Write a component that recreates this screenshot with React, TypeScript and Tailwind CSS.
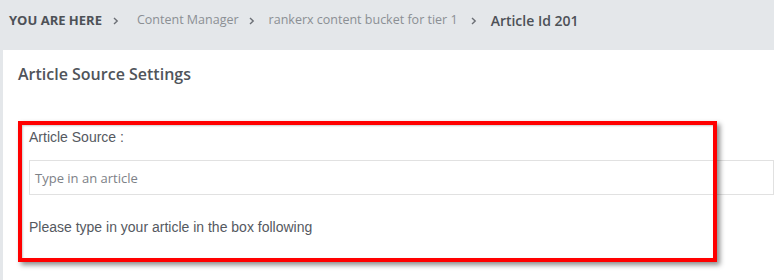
import React from 'react';

const Chevron = ({ className = '' }: { className?: string }) => (
  <svg width="6" height="8" viewBox="0 0 6 8" className={`shrink-0 ${className}`}>
    <path d="M1 1l3.2 3L1 7" fill="none" stroke="#6b6f75" strokeWidth="1.4" />
  </svg>
);

export default function App() {
  return (
    <div className="w-[774px] h-[280px] overflow-hidden bg-[#e4e7ea] font-['Open_Sans',sans-serif]">
      {/* Breadcrumb bar */}
      <div className="h-[50px] flex items-center pl-[9px] pb-[9px] text-[12.5px]">
        <span className="font-bold text-[13px] text-[#4d5157]">YOU ARE HERE</span>
        <Chevron className="ml-[11px] mr-[18px]" />
        <span className="text-[#8b8f94]">Content Manager</span>
        <Chevron className="ml-[10px] mr-[14px]" />
        <span className="text-[#8b8f94]">rankerx content bucket for tier 1</span>
        <Chevron className="ml-[13px] mr-[14px]" />
        <span className="font-semibold text-[14px] text-[#4d5157]">Article Id 201</span>
      </div>

      {/* Panel */}
      <div className="relative ml-[3px] bg-white h-[230px]">
        <h2 className="pl-[15px] pt-[13px] text-[16px] leading-[22px] font-semibold text-[#50545a]">
          Article Source Settings
        </h2>

        <div className="pl-[26px] pt-[44px] font-['Liberation_Sans',Arial,sans-serif] text-[14px] text-[#55595f]">
          <label className="block leading-[16px]">Article Source :</label>
          <div className="mt-[15px] h-[35px] border border-[#e1e1e1] flex items-center pl-[5px] pt-[2px] font-['Open_Sans',sans-serif] text-[13px] text-[#7d8187]">
            Type in an article
          </div>
          <p className="mt-[24px] leading-[16px]">Please type in your article in the box following</p>
        </div>

        {/* Annotation highlight */}
        <div className="absolute left-[15px] top-[71px] w-[699px] h-[141px] border-4 border-[#ff0000] shadow-[3px_3px_5px_rgba(0,0,0,0.45),inset_1px_1px_2px_rgba(0,0,0,0.2)] pointer-events-none" />
      </div>
    </div>
  );
}
